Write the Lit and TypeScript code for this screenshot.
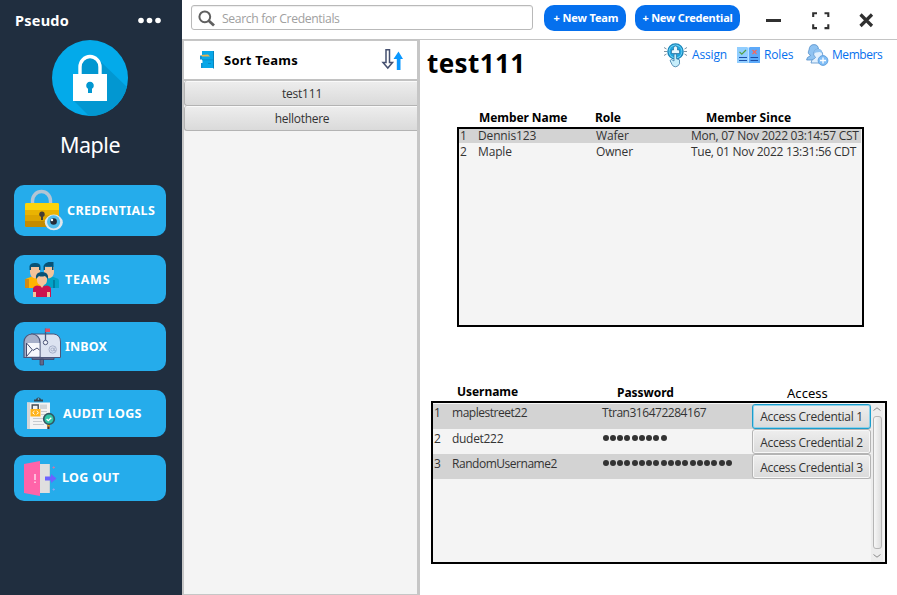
import { LitElement, html, css, svg } from "lit";
import { customElement } from "lit/decorators.js";

const icons = {
  padlock: svg`
    <circle cx="38" cy="38" r="38" fill="#03aaea"/>
    <path d="M48 21 L75 47 A38 38 0 0 1 37 76 L22 61 V36 Z" fill="#0297d1"/>
    <path d="M28 35 V27 a10 10.5 0 0 1 20 0 V35" fill="#0297d1" stroke="#fff" stroke-width="3.4"/>
    <rect x="21" y="34" width="34" height="27" fill="#fff"/>
    <path d="M36 53 v-4.2 a3.8 3.8 0 1 1 4 0 V53 Z" fill="#0297d1"/>`,
  credentials: svg`
    <path d="M8.5 14 V11 a9 9.5 0 0 1 18 0 V14" fill="none" stroke="#b4c5d4" stroke-width="3.4"/>
    <rect x="1" y="13" width="34" height="24" rx="1.5" fill="#eab302"/>
    <path d="M1 20 V14.500 a1.500 1.500 0 0 1 1.500-1.500 H33.500 a1.500 1.500 0 0 1 1.500 1.500 V20 Z" fill="#fbd40a"/>
    <rect x="1" y="25" width="34" height="6" fill="#dda400"/>
    <path d="M1 31 H35 V35.500 a1.500 1.500 0 0 1-1.500 1.500 H2.500 a1.500 1.500 0 0 1-1.500-1.500 Z" fill="#c48b00"/>
    <circle cx="18" cy="24.300" r="2.700" fill="#453c35"/><path d="M17 25h2v5h-2z" fill="#453c35"/>
    <ellipse cx="29.800" cy="32.400" rx="9" ry="7.800" fill="#dfe7ed"/>
    <circle cx="29.600" cy="31.800" r="6.600" fill="#52bdec"/><circle cx="29.600" cy="31.500" r="3.300" fill="#252b38"/>
    <circle cx="28" cy="30" r="1.200" fill="#fff"/>`,
  teams: svg`
    <path d="M0 26 V19 q0-2.500 3-3 l4-1.500 h6 l4 3 V26 Z" fill="#ffb400"/><path d="M0 17h4v9H0z" fill="#d18b14"/>
    <path d="M17 26 v-8 l4-3.500 h6 l4 1.500 q3 .5 3 3 V26 Z" fill="#02a2c8"/><path d="M28 18h2v8h-2z" fill="#027da2"/>
    <path d="M5 5 h10 v5 q0 5-5 6.500 q-5-1.500-5-6.500 Z M19 5 h10 v5 q0 5-5 6.500 q-5-1.500-5-6.500 Z" fill="#f3c39b"/>
    <path d="M4.500 8 V4 q1-3 5-3 q6-.5 6 4 v3 h-1.500 V5 h-8 v3 Z M18.500 8 V4 q1-3 5-4 h5 v8 h-1.500 V4.500 q-5 .5-7 0 V8 Z" fill="#075275"/>
    <path d="M8 35 V27 q0-3 4-3.500 l5 1 5-1 q4 .5 4 3.500 V35 Z" fill="#cc124e"/>
    <path d="M12 14 h10 v4 q0 4-3 5 l-2 3-2-3 q-3-1-3-5 Z M8 30h3v5H8z M22 30h3v5h-3z" fill="#f3c39b"/>
    <path d="M11 17 q-1-7 6-7 t6 7 l-3-3 q-4 1-6 0 Z" fill="#075275"/>`,
  inbox: svg`
    <path d="M17 31 v6 h3.500 v-6 Z M9 29 H31 v2.500 H9 Z" fill="#626788" stroke="#3c4468" stroke-width=".8"/>
    <path d="M8 6 H31 q6.500 1 6.500 8 V29.500 H17 Z" fill="#dce3f1" stroke="#4d5679" stroke-width="1"/>
    <path d="M1 29.500 V14 a8 8 0 0 1 16 0 V29.500 Z" fill="#a6b0c9" stroke="#4d5679" stroke-width="1.200"/>
    <path d="M3.500 15 H16.500 V28.500 H3.500 Z" fill="#f6f8fc"/>
    <path d="M3.500 28.500 V15 L10 22.500 L14 20 L16.500 22 M3.500 28.500 L9 22" fill="none" stroke="#444e71" stroke-width="1"/>
    <path d="M22.500 14 V.5" stroke="#4d5679" stroke-width="1.300"/><path d="M22.300 .5 H27 V4 H22.300 Z" fill="#e44d60"/>
    <circle cx="22.500" cy="14.500" r="2.200" fill="#eef2f9" stroke="#4d5679"/>
    <circle cx="29.700" cy="21.500" r="3.700" fill="none" stroke="#a6b0c9" stroke-width="1"/>
    <circle cx="29.400" cy="21.500" r="1.500" fill="none" stroke="#a6b0c9"/><path d="M31.200 19.500v3.500l1.500-.5" fill="none" stroke="#a6b0c9"/>`,
  audit: svg`
    <path d="M0 5.500 H23 V32 H0 Z" fill="#f3f3f3"/><path d="M0 5.500h3V32H0z" fill="#d4d7da"/>
    <path d="M7 4.500 V2.500 H9 q.5-2 2.500-2 t2.500 2 H16 V4.500 Z" fill="#36424b"/><circle cx="11.500" cy="2" r=".9" fill="#5aa7cb"/>
    <path d="M13 7.500h7V12h-7z" fill="#d0d4d7"/>
    <path d="M14 14.500h6 M6 21.500h10 M6 24.500h9 M6 27.500h11 M14 17.500h4" stroke="#c7cbcf" stroke-width="1"/>
    <path d="M5.200 13 V8 H11.200 V13" fill="none" stroke="#424b52" stroke-width="1.400"/>
    <path d="M3.500 12h10v7.500h-10z" fill="#ffb319"/>
    <path d="M7.500 14 L5.700 15.700 L7.500 17.500 M9.700 14 L11.500 15.700 L9.700 17.500" fill="none" stroke="#fff" stroke-width="1"/>
    <path d="M21.500 28 v4" stroke="#46322b" stroke-width="2.400"/><path d="M21.500 27.500v2" stroke="#f3a516" stroke-width="2.400"/>
    <circle cx="22" cy="22" r="5.300" fill="#30c5a6" stroke="#315863" stroke-width="1.700"/>
    <path d="M19.600 22 l1.700 1.700 3-3" fill="none" stroke="#fff" stroke-width="1.300"/>`,
  logout: svg`
    <path d="M15 3h11v29H15z" fill="#dfdfdf"/><path d="M25 3h1v29h-1z" fill="#c5d1d7"/>
    <path d="M0 3 L16 0 V35 L0 32 Z" fill="#ff64a9"/>
    <path d="M11 13v6" stroke="#ffe2ef" stroke-width="1.400"/><path d="M11 20.500v1.500" stroke="#ffe2ef" stroke-width="1.400"/>
    <path d="M21 15.500 H27 V13 L32.500 17.500 L27 22 V19.500 H21 Z" fill="#6c63ff"/>
    <path d="M29.700 5.300v2.400 M28.500 6.500h2.400" stroke="#dd739f" stroke-width=".9"/><path d="M29.700 27.300v2.400 M28.500 28.500h2.400" stroke="#8ba5f5" stroke-width=".9"/>`,
  search: svg`<circle cx="6.800" cy="6.800" r="5.400" fill="none" stroke="#606060" stroke-width="2"/><path d="M10.500 10.500 L16 15.500" stroke="#606060" stroke-width="2.800"/>`,
  cabinet: svg`
    <path d="M0 4.500h6v4H0z M1 12h6v5H1z" fill="#118fd0"/><path d="M2 0h12v9H2z M2.500 9h11.500v8H2.500z" fill="#08a7e8"/>
    <path d="M13 0h1v17.500h-1z M2 8.500h12v.8H2z" fill="#0785bd"/><path d="M8 12.500h3" stroke="#0785bd" stroke-width=".8"/><path d="M1 4 L8 3.500 L10 5.500H2z" fill="#e9b44d"/>`,
  sort: svg`
    <path d="M4 .8 H7.500 V13.500 H10.500 L5.800 19 L1 13.500 H4 Z" fill="#fff" stroke="#465170" stroke-width="1.500"/>
    <path d="M14.800 21 V10 H11.500 L16.500 2.500 L21 10 H18.500 V21 Z" fill="#0a98ff"/>`,
  assign: svg`
    <circle cx="11.500" cy="8.500" r="7.600" fill="#6dd3f6" stroke="#1784b9" stroke-width="1.400"/>
    <circle cx="11.500" cy="8.500" r="6" fill="#1fa5df"/>
    <path d="M9.500 7 V5 q0-2 2-2 t2 2 V7 h2 v3.500 h-8 V7 Z" fill="#e8f8ff" stroke="#155e8d" stroke-width=".6"/>
    <path d="M10 11 v7 l-2.500-1.500-1.500 1 2 4 q1 2.300 3.500 2.300 t4-3 v-4 l-3-1 V11 Z" fill="#c6eefb" stroke="#3a7aa4" stroke-width=".8"/>
    <path d="M0 4.500l2.500 1.500M0 8.500h3M0 12.500l2.500-1.500M23 4.500l-2.500 1.500M23 8.500h-3M23 12.500l-2.500-1.500" stroke="#7d93a3" stroke-width="1"/>`,
  roles: svg`
    <path d="M0 0h10l1.500 1v15H0z" fill="#91ceff"/><path d="M11.500 1l1.500-1h10v16H11.500z" fill="#5caafa"/><path d="M11.500 .5v15" stroke="#b9e1ff"/>
    <path d="M2.500 4.800l2.300 2.300L9 3" fill="none" stroke="#55a044" stroke-width="1.200"/>
    <path d="M15.500 3l4 4M19.500 3L15.500 7" stroke="#f16a62" stroke-width="1.300"/>
    <path d="M2 10.500h8M2 13.500h8M13.500 10.500h7.500M13.500 13.500h7.500" stroke="#1b4fa8" stroke-width="1"/>`,
  members: svg`
    <path d="M.6 16 q0-3 3.500-4 L4.500 11 Q1 10 3 6 Q3.500 .6 8 .6 T12.500 6 q2 4-1 5 l1 1 q4 1 4 4 Z" fill="#8fc3f2" stroke="#5791ca" stroke-width=".8"/>
    <path d="M5 19 q0-3.500 3.500-4.500 l1-1 Q6.500 11 8 8 q1-3 4-3 t4.500 4 q1 3-1 5 l1 1 q3 1 3 4 Z" fill="#e1f0fe" stroke="#5791ca" stroke-width=".8"/>
    <path d="M8 9.500 q0-4.500 4-4.500 q4 0 4 4.500 l-2-1.500-4 .5 Z" fill="#8fc3f2"/>
    <circle cx="17" cy="16.500" r="4.900" fill="#80bdf5" stroke="#5c9ddb" stroke-width=".9"/><path d="M17 13.500v6M14 16.500h6" stroke="#fff" stroke-width="1.300"/>`,
};

const glyph = (art: unknown, w: number, h: number) =>
  html`<svg width=${w} height=${h} viewBox="0 0 ${w} ${h}">${art}</svg>`;

const base = css`
  * { box-sizing: border-box; }
  svg { display: block; flex: none; overflow: visible; }
  button { margin: 0; font: inherit; color: inherit; }
`;

@customElement("side-nav")
class SideNav extends LitElement {
  static styles = [base, css`
    :host { display: flex; flex-direction: column; align-items: center; width: 182px; background: #202e3f; color: #fff; padding: 10px 16px 0 14px; }
    .brand { display: flex; justify-content: space-between; align-items: center; width: 100%; height: 20px; padding: 0 5px 0 1px; font: 700 14.5px/20px "Noto Sans", sans-serif; }
    .brand span { letter-spacing: .25px; }
    .logo { margin-top: 10px; }
    .name { font: 400 21.500px/30px "Noto Sans", sans-serif; letter-spacing: -.45px; margin: 14px 0 25px; }
    .item { display: flex; align-items: center; width: 152px; flex: none; border: 0; border-radius: 10px; background: #25aceb; color: #fff; padding: 0; font: 700 12.5px/18px "Noto Sans", sans-serif; text-align: left; letter-spacing: .37px; }
    .item span { white-space: nowrap; }
    .credentials { height: 51px; padding-left: 10px; gap: 3px; }
    .teams { height: 49px; padding-left: 11px; margin-top: 19px; gap: 6px; letter-spacing: .75px; }
    .inbox { height: 49px; padding-left: 9px; margin-top: 18px; gap: 4px; letter-spacing: .1px; }
    .audit { height: 47px; padding-left: 13px; margin-top: 19px; gap: 8px; }
    .logout { height: 46px; padding-left: 10px; margin-top: 18px; gap: 5px; letter-spacing: .3px; }
  `];
  render() {
    const items: [string, string, unknown, number, number][] = [
      ["credentials", "CREDENTIALS", icons.credentials, 40, 41],
      ["teams", "TEAMS", icons.teams, 34, 35],
      ["inbox", "INBOX", icons.inbox, 38, 37],
      ["audit", "AUDIT LOGS", icons.audit, 28, 33],
      ["logout", "LOG OUT", icons.logout, 33, 35],
    ];
    return html`
      <div class="brand"><span>Pseudo</span>
        ${glyph(svg`<circle cx="3" cy="3.500" r="2.800" fill="#fff"/><circle cx="11.500" cy="3.500" r="2.800" fill="#fff"/><circle cx="20" cy="3.500" r="2.800" fill="#fff"/>`, 23, 6)}</div>
      <div class="logo">${glyph(icons.padlock, 76, 76)}</div>
      <div class="name">Maple</div>
      ${items.map(([k, label, art, w, h]) => html`<button class="item ${k}">${glyph(art, w, h)}<span>${label}</span></button>`)}
    `;
  }
}

@customElement("top-bar")
class TopBar extends LitElement {
  static styles = [base, css`
    :host { display: flex; align-items: flex-start; height: 40px; padding: 5px 23px 0 9px; border-bottom: 1px solid #c4c4c4; background: #fff; }
    .search { display: flex; align-items: center; width: 342px; height: 25px; padding: 1px 0 0 6px; gap: 8px; border: 1px solid #b9b9b9; border-radius: 3px; box-shadow: inset 0 1px 1px #eee; color: #a0a0a0; font: 400 12px/16px "Open Sans", sans-serif; letter-spacing: -.35px; }
    .search span { letter-spacing: -.37px; font-size: 12.200px; padding-top: 1px; }
    .pill { height: 26px; border: 0; border-radius: 10px; background: #0570ee; color: #fff; padding: 0; font: 700 11px/16px "Noto Sans", sans-serif; white-space: nowrap; letter-spacing: -.13px; }
    .team { width: 82px; margin-left: 11px; padding-left: 2px; }
    .cred { width: 105px; margin-left: 9px; letter-spacing: -.22px; }
    .controls { display: flex; align-items: center; height: 30px; margin-left: auto; }
    .max { margin: 0 29px 0 31px; }
  `];
  render() {
    return html`
      <div class="search">${glyph(icons.search, 16, 16)}<span>Search for Credentials</span></div>
      <button class="pill team">+ New Team</button>
      <button class="pill cred">+ New Credential</button>
      <div class="controls">
        ${glyph(svg`<path d="M0 1.500h15" stroke="#303030" stroke-width="3"/>`, 15, 3)}
        <span class="max">${glyph(svg`<path d="M1.200 5V1.200H5 M12.500 1.200h3.800V5 M16.300 12.300v3.800h-3.800 M5 16.100H1.200v-3.800" fill="none" stroke="#303030" stroke-width="2.100"/>`, 18, 17)}</span>
        ${glyph(svg`<path d="M1.500 1.500L13 13M13 1.500L1.500 13" stroke="#303030" stroke-width="3.200"/>`, 15, 15)}
      </div>`;
  }
}

@customElement("team-list")
class TeamList extends LitElement {
  static styles = [base, css`
    :host { display: flex; flex-direction: column; width: 238px; background: #f4f4f4; border-right: 3px solid #c6c6c6; border-left: 2px solid #c6c6c6; border-bottom: 1px solid #c6c6c6; }
    .head { display: flex; align-items: center; height: 41px; padding: 0 13px 0 16px; background: #fff; border-top: 1px solid #c6c6c6; border-bottom: 2px solid #c2c2c2; font: 700 13px/20px "Noto Sans", sans-serif; color: #000; }
    .head span { flex: 1; margin-left: 9px; letter-spacing: .25px; }
    .team { height: 25px; padding: 2px 0 0 2px; border: 1px solid #b3b3b3; border-width: 0 0 1px 1px; border-radius: 3px 0 0 3px; box-shadow: inset 0 1px #fafafa; background: linear-gradient(#eee, #dadada); color: #333; font: 400 12px/18px "Open Sans", sans-serif; letter-spacing: -.3px; }
    .team.first { letter-spacing: -.2px; }
  `];
  render() {
    return html`<div class="head">${glyph(icons.cabinet, 15, 18)}<span>Sort Teams</span>${glyph(icons.sort, 22, 22)}</div>
      ${["test111", "hellothere"].map((t, i) => html`<button class="team ${i ? "" : "first"}">${t}</button>`)}`;
  }
}

@customElement("member-table")
class MemberTable extends LitElement {
  static styles = [base, css`
    :host { display: block; width: 407px; margin-left: 37px; }
    .cols { display: grid; grid-template-columns: 19px 118px 95px 1fr; }
    .head { height: 18px; padding: 0 2px; font: 700 12px/18px "Noto Sans", sans-serif; color: #000; letter-spacing: -.08px; }
    .head span { padding-left: 1px; }
    .head .role { padding-left: 0; margin-left: -1px; }
    .head .since { padding-left: 15px; letter-spacing: .03px; }
    .box { height: 200px; border: 2px solid #000; background: #f4f4f4; color: #333; }
    .row { height: 17px; margin-right: 1px; font: 400 12px/16px "Open Sans", sans-serif; white-space: nowrap; letter-spacing: -.15px; }
    .row .num { padding-left: 1px; }
    .row.on { height: 14px; line-height: 13px; margin-bottom: 1px; background: #d3d3d3; }
    .row .since { letter-spacing: -.28px; }
  `];
  render() {
    const rows = [["Dennis123", "Wafer", "Mon, 07 Nov 2022 03:14:57 CST"], ["Maple", "Owner", "Tue, 01 Nov 2022 13:31:56 CDT"]];
    return html`
      <div class="cols head"><i></i><span>Member Name</span><span class="role">Role</span><span class="since">Member Since</span></div>
      <div class="box">${rows.map(([n, r, d], i) => html`<div class="cols row ${i === 0 ? "on" : ""}"><span class="num">${i + 1}</span><span>${n}</span><span>${r}</span><span class="since">${d}</span></div>`)}</div>`;
  }
}

@customElement("credential-table")
class CredentialTable extends LitElement {
  static styles = [base, css`
    :host { display: block; width: 456px; margin-left: 11px; }
    .head { display: grid; grid-template-columns: 26px 160px 170px 1fr; height: 19px; font: 700 12px/20px "Noto Sans", sans-serif; color: #000; letter-spacing: -.05px; }
    .head .pass { line-height: 21px; }
    .head .access { font-weight: 400; font-size: 13px; line-height: 23px; letter-spacing: .05px; }
    .box { display: flex; height: 163px; border: 2px solid #000; background: #f4f4f4; padding-top: 1px; }
    .rows { width: 438px; }
    .row { display: grid; grid-template-columns: 19px 150px 150px 119px; height: 25px; color: #333; font: 400 12px/19px "Open Sans", sans-serif; white-space: nowrap; letter-spacing: -.47px; }
    .row:nth-child(odd) { background: #d3d3d3; }
    .row:first-child { line-height: 18px; }
    .row:nth-child(2) { letter-spacing: -.3px; }
    .row .num { padding-left: 1px; }
    .dots { display: flex; align-items: center; height: 17px; gap: 1.250px; padding-left: .5px; }
    .dots i { width: 6px; height: 6px; border-radius: 50%; background: #333; }
    .btn { height: 25px; padding: 1px 0 0; border: 1px solid #b4b4b4; border-radius: 3px; box-shadow: inset 0 0 0 1px #f7f7f7; background: linear-gradient(#eee, #dadada); letter-spacing: -.28px; }
    .btn.focus { border-color: #1a9dcc; box-shadow: inset 0 0 0 1px #8ed0e9; }
    .bar { display: flex; flex-direction: column; justify-content: space-between; align-items: center; width: 12px; padding: 3px 0 4px; background: #ececec; }
    .thumb { width: 9px; height: 133px; border: 1px solid #b5b5b5; border-radius: 3px; background: linear-gradient(90deg, #f7f7f7, #dedede); }
  `];
  render() {
    const rows: [string, string | number][] = [["maplestreet22", "Ttran316472284167"], ["dudet222", 9], ["RandomUsername2", 18]];
    return html`
      <div class="head"><i></i><span>Username</span><span class="pass">Password</span><span class="access">Access</span></div>
      <div class="box">
        <div class="rows">${rows.map(([u, p], i) => html`<div class="row">
          <span class="num">${i + 1}</span><span>${u}</span>
          ${typeof p === "string" ? html`<span>${p}</span>` : html`<span class="dots">${Array.from({ length: p }, () => html`<i></i>`)}</span>`}
          <button class="btn ${i === 0 ? "focus" : ""}">Access Credential ${i + 1}</button></div>`)}</div>
        <div class="bar">
          ${glyph(svg`<path d="M.5 3.500L4 .8L7.500 3.500" fill="none" stroke="#8c8c8c"/>`, 8, 4)}
          <div class="thumb"></div>
          ${glyph(svg`<path d="M.5 .5L4 3.200L7.500 .5" fill="none" stroke="#8c8c8c"/>`, 8, 4)}
        </div>
      </div>`;
  }
}

@customElement("app-root")
class AppRoot extends LitElement {
  static styles = [base, css`
    :host { display: grid; grid-template-columns: 182px 1fr; width: 897px; height: 595px; overflow: hidden; background: #fff; }
    .work { display: grid; grid-template-rows: 40px 1fr; min-width: 0; }
    .body { display: flex; min-height: 0; }
    .main { flex: 1; min-width: 0; }
    .title { display: flex; justify-content: space-between; height: 69px; padding: 0 0 0 7px; }
    h1 { margin: 0; font: 700 26px/46px "Noto Sans", sans-serif; letter-spacing: .4px; color: #000; }
    .links { display: grid; grid-template-columns: 28px 45px 27px 42px 26px 65px; align-items: center; height: 29px; color: #0570ee; font: 400 12px/18px "Open Sans", sans-serif; letter-spacing: -.15px; }
    .links span { padding-top: 1px; }
    .links .members { letter-spacing: -.45px; }
    credential-table { margin-top: 55px; }
  `];
  render() {
    return html`<side-nav></side-nav>
      <div class="work"><top-bar></top-bar>
        <div class="body"><team-list></team-list>
          <div class="main">
            <div class="title"><h1>test111</h1>
              <div class="links">${glyph(icons.assign, 24, 24)}<span>Assign</span>${glyph(icons.roles, 23, 16)}<span>Roles</span>${glyph(icons.members, 22, 22)}<span class="members">Members</span></div>
            </div>
            <member-table></member-table>
            <credential-table></credential-table>
          </div>
        </div>
      </div>`;
  }
}
